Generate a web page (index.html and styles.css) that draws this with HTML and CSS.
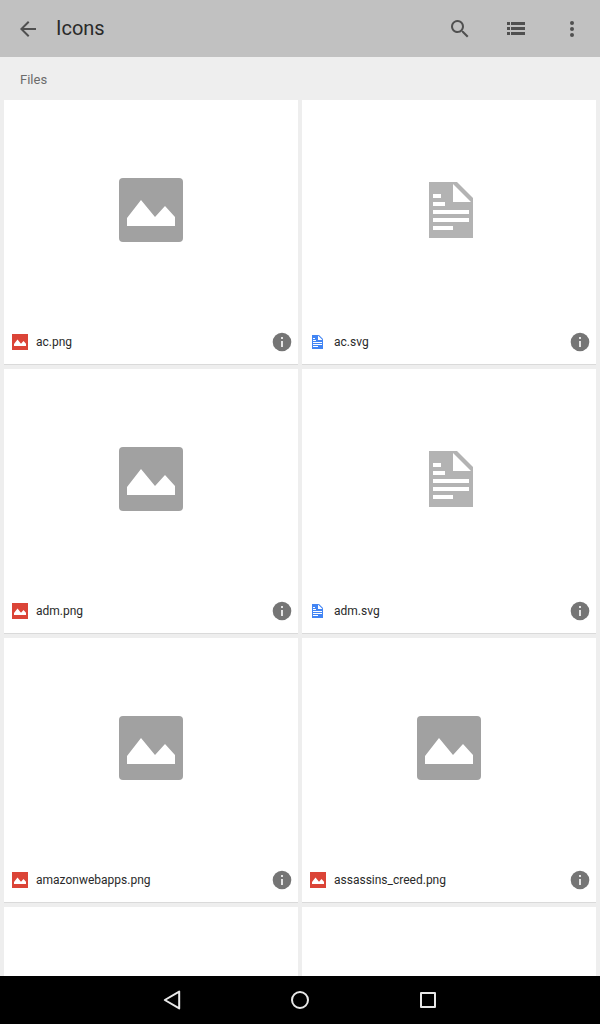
FILE: index.html
```html
<!DOCTYPE html>
<html lang="en">
<head>
<meta charset="utf-8">
<meta name="viewport" content="width=device-width, initial-scale=1">
<title>Icons</title>
<link rel="stylesheet" href="styles.css">
</head>
<body>
<svg class="sprite" aria-hidden="true">
  <symbol id="image" viewBox="0 0 64 64">
    <path fill="#fff" d="M8 40 22 22 36 39 46 28 56 39V48H8z"/>
  </symbol>
  <symbol id="doc" viewBox="0 0 64 64">
    <path fill="currentColor" d="M12 4H40L56 20V60H12z"/>
    <path fill="#fff" d="M36 6V24H54zM16 16h8v4h-8zM16 24h12v4H16zM16 32h36v4H16zM16 40h36v4H16zM16 48h20v4H16z"/>
  </symbol>
  <symbol id="info" viewBox="0 0 20 20">
    <circle cx="10" cy="10" r="9.3" fill="#757575"/>
    <path fill="#e4e4e4" d="M9 5h2v2H9zM9 9h2v6H9z"/>
  </symbol>
</svg>

<header class="toolbar">
  <button class="tool" aria-label="Back"><svg class="tool-icon" viewBox="0 0 24 24"><path d="M20 11H7.83l5.59-5.59L12 4l-8 8 8 8 1.41-1.41L7.83 13H20v-2z"/></svg></button>
  <h1 class="title">Icons</h1>
  <button class="tool" aria-label="Search"><svg class="tool-icon" viewBox="0 0 24 24"><path d="M15.5 14h-.79l-.28-.27A6.5 6.5 0 1 0 13.73 14.43l.27.28v.79l5 4.99L20.49 19l-4.99-5zm-6 0a4.5 4.5 0 1 1 0-9 4.5 4.5 0 0 1 0 9z"/></svg></button>
  <button class="tool" aria-label="List view"><svg class="tool-icon" viewBox="0 0 24 24"><path d="M3 5h3v3H3zM7 5h14v3H7zM3 10h3v3H3zM7 10h14v3H7zM3 15h3v3H3zM7 15h14v3H7z"/></svg></button>
  <button class="tool" aria-label="More options"><svg class="tool-icon" viewBox="0 0 24 24"><circle cx="12" cy="6" r="2"/><circle cx="12" cy="12" r="2"/><circle cx="12" cy="18" r="2"/></svg></button>
</header>

<main class="content">
  <h2 class="section">Files</h2>
  <div class="grid">
    <article class="card">
      <div class="preview"><svg class="thumb thumb-image"><use href="#image"/></svg></div>
      <div class="caption"><svg class="type type-image"><use href="#image"/></svg><span class="name">ac.png</span><button class="info" aria-label="Details of ac.png"><svg class="info-icon"><use href="#info"/></svg></button></div>
    </article>
    <article class="card">
      <div class="preview"><svg class="thumb thumb-doc"><use href="#doc"/></svg></div>
      <div class="caption"><svg class="type type-doc" viewBox="4 0 64 64"><use href="#doc" width="64" height="64"/></svg><span class="name">ac.svg</span><button class="info" aria-label="Details of ac.svg"><svg class="info-icon"><use href="#info"/></svg></button></div>
    </article>
    <article class="card">
      <div class="preview"><svg class="thumb thumb-image"><use href="#image"/></svg></div>
      <div class="caption"><svg class="type type-image"><use href="#image"/></svg><span class="name">adm.png</span><button class="info" aria-label="Details of adm.png"><svg class="info-icon"><use href="#info"/></svg></button></div>
    </article>
    <article class="card">
      <div class="preview"><svg class="thumb thumb-doc"><use href="#doc"/></svg></div>
      <div class="caption"><svg class="type type-doc" viewBox="4 0 64 64"><use href="#doc" width="64" height="64"/></svg><span class="name">adm.svg</span><button class="info" aria-label="Details of adm.svg"><svg class="info-icon"><use href="#info"/></svg></button></div>
    </article>
    <article class="card">
      <div class="preview"><svg class="thumb thumb-image"><use href="#image"/></svg></div>
      <div class="caption"><svg class="type type-image"><use href="#image"/></svg><span class="name">amazonwebapps.png</span><button class="info" aria-label="Details of amazonwebapps.png"><svg class="info-icon"><use href="#info"/></svg></button></div>
    </article>
    <article class="card">
      <div class="preview"><svg class="thumb thumb-image"><use href="#image"/></svg></div>
      <div class="caption"><svg class="type type-image"><use href="#image"/></svg><span class="name">assassins_creed.png</span><button class="info" aria-label="Details of assassins_creed.png"><svg class="info-icon"><use href="#info"/></svg></button></div>
    </article>
    <article class="card"><div class="preview"></div></article>
    <article class="card"><div class="preview"></div></article>
  </div>
</main>

<nav class="navbar" aria-label="System">
  <button class="nav-button" aria-label="Back"><svg class="nav-icon" viewBox="0 0 24 24"><path d="M19.2 3.6V20.4L4.8 12z"/></svg></button>
  <button class="nav-button" aria-label="Home"><svg class="nav-icon" viewBox="0 0 24 24"><circle cx="12" cy="12" r="8"/></svg></button>
  <button class="nav-button" aria-label="Recent apps"><svg class="nav-icon" viewBox="0 0 24 24"><path d="M5 5H19V19H5z"/></svg></button>
</nav>
</body>
</html>
```

FILE: styles.css
```css
* {
  box-sizing: border-box;
}

body {
  margin: 0;
  height: 100vh;
  display: flex;
  flex-direction: column;
  background: #eee;
  color: #2a2a2a;
  font-family: Roboto, "Liberation Sans", sans-serif;
}

button {
  display: flex;
  align-items: center;
  justify-content: center;
  padding: 0;
  border: 0;
  background: none;
  cursor: pointer;
}

svg {
  display: block;
}

.sprite {
  position: absolute;
  width: 0;
  height: 0;
}

.toolbar {
  flex: none;
  display: flex;
  align-items: center;
  height: 57px;
  padding-top: 1px;
  background: #c1c1c1;
}

.tool {
  width: 56px;
  height: 56px;
}

.tool-icon {
  width: 24px;
  height: 24px;
  fill: #505050;
}

.title {
  flex: 1;
  margin: 0;
  padding-bottom: 2px;
  font-size: 20px;
  line-height: 24px;
  font-weight: 400;
}

.content {
  flex: 1;
  min-height: 0;
  overflow: hidden;
}

.section {
  margin: 0;
  padding: 15px 20px 12px;
  font-size: 13px;
  line-height: 16px;
  font-weight: 400;
  color: #6b6b6b;
}

.grid {
  display: grid;
  grid-template-columns: repeat(2, minmax(0, 1fr));
  gap: 4px;
  padding: 0 4px;
}

.card {
  background: #fff;
  border-bottom: 1px solid #dadada;
}

.preview {
  display: flex;
  align-items: center;
  justify-content: center;
  height: 220px;
}

.thumb {
  width: 64px;
  height: 64px;
}

.thumb-image {
  border-radius: 4px;
  background: #a1a1a1;
}

.thumb-doc {
  color: #b3b3b3;
}

.caption {
  display: flex;
  align-items: center;
  gap: 8px;
  height: 44px;
  padding: 0 6px 0 8px;
}

.type {
  flex: none;
  width: 16px;
  height: 16px;
}

.type-image {
  background: #db4437;
}

.type-doc {
  color: #4285f4;
}

.name {
  flex: 1;
  min-width: 0;
  overflow: hidden;
  text-overflow: ellipsis;
  white-space: nowrap;
  font-size: 12px;
  line-height: 16px;
}

.info-icon {
  width: 20px;
  height: 20px;
}

.navbar {
  flex: none;
  display: flex;
  justify-content: center;
  gap: 32px;
  background: #000;
}

.nav-button {
  width: 96px;
  height: 48px;
}

.nav-icon {
  width: 24px;
  height: 24px;
  fill: none;
  stroke: #e8e8e8;
  stroke-width: 2;
  stroke-linejoin: round;
}
```
